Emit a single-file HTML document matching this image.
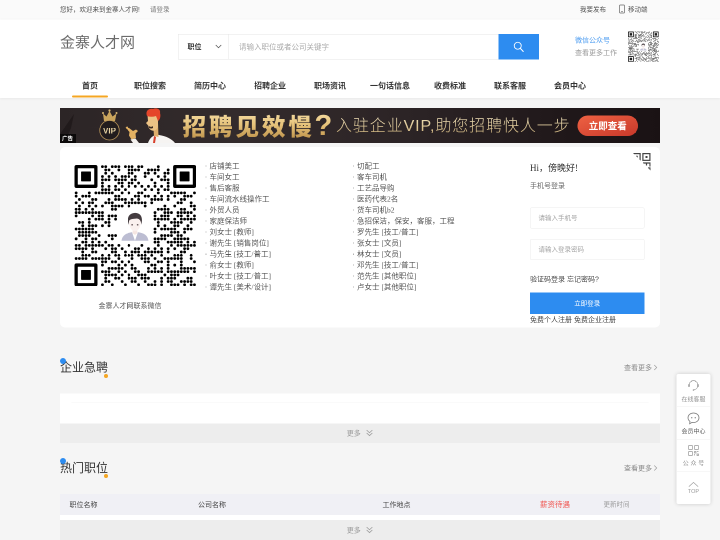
<!DOCTYPE html>
<html lang="zh-CN">
<head>
<meta charset="utf-8">
<title>金寨人才网</title>
<style>
*{box-sizing:border-box;margin:0;padding:0}
html,body{width:720px;height:540px;overflow:hidden;background:#f5f5f5}
body{font-family:"Liberation Sans","Noto Sans CJK SC",sans-serif;color:#333}
#stage{will-change:transform;position:absolute;left:0;top:0;width:1440px;height:1080px;transform:scale(.5);transform-origin:0 0;background:#f5f5f5;overflow:hidden}
.abs{position:absolute;white-space:nowrap}
#topbar{left:0;top:0;width:1440px;height:39px;background:#fafafa}
#topbar span{position:absolute;top:0;line-height:37px;font-size:13px;color:#505050;white-space:nowrap}
#header{left:0;top:39px;width:1440px;height:157px;background:#fff;box-shadow:0 1px 6px rgba(0,0,0,.07)}
#logo{left:120px;top:61px;font-size:30px;line-height:48px;color:#6c6c6c;font-weight:400;letter-spacing:0}
#search{left:356px;top:68px;width:722px;height:51px;border:1px solid #e4e4e4;background:#fff}
#search .sel{position:absolute;left:0;top:0;width:100px;height:49px;border-right:1px solid #e4e4e4}
#search .sel b{position:absolute;left:18px;top:0;line-height:49px;font-size:14px;color:#333}
#search .ph{position:absolute;left:121px;top:0;line-height:49px;font-size:15px;color:#aaa}
#sbtn{left:997px;top:68px;width:81px;height:51px;background:#2d8cf0}
.nav{top:152px;width:120px;text-align:center;font-size:16px;font-weight:bold;color:#333;line-height:40px}
#navline{left:144px;top:191px;width:72px;height:4px;background:#f5a623;border-radius:2px}
#banner{left:120px;top:216px;width:1200px;height:70px;background:#2c2526;overflow:hidden}
#card{left:120px;top:294px;width:1200px;height:361px;background:#fff;border-radius:10px}
.li{font-family:"Liberation Serif","Noto Sans CJK SC",serif;font-size:15px;color:#555;line-height:22px}
.sec{font-size:24px;color:#333;line-height:36px}
.more{font-size:14px;color:#888;line-height:20px}
.dotb{width:12px;height:12px;border-radius:50%;background:#2d8cf0}
.doto{width:8px;height:8px;border-radius:50%;background:#f5a623}
.bar{left:120px;width:1200px;background:#ededed;text-align:center;font-size:14px;color:#999}
.jl{list-style:none;line-height:22.08px}
.jl li{height:22.08px;padding-left:9px;position:relative}
.jl li i{position:absolute;left:1px;top:10px;width:2px;height:2px;background:#999;border-radius:1px}
.inp{left:1060px;width:229px;height:42px;border:1px solid #ebebeb;border-radius:3px;background:#fff}
.inp span{position:absolute;left:16px;top:0;line-height:40px;font-size:13px;color:#a2a2a2}
.th{top:988px;line-height:42px;font-size:14px;color:#444}
.sw{left:1353px;width:68px;text-align:center;font-size:12px;line-height:18px}
</style>
</head>
<body>
<div id="stage">
<!--QRSYM-->
<svg width="0" height="0" style="position:absolute"><defs><symbol id="qr" viewBox="0 0 370 370" preserveAspectRatio="none">
<path d="M85 5h0M95 5h0M115 5h0M125 5h0M135 5h0M155 5h0M165 5h0M175 5h0M195 5h0M205 5h0M255 5h0M95 15h0M105 15h0M135 15h0M165 15h0M175 15h0M185 15h0M195 15h0M225 15h0M235 15h0M245 15h0M255 15h0M285 15h0M95 25h0M115 25h0M165 25h0M175 25h0M215 25h0M225 25h0M245 25h0M275 25h0M285 25h0M85 35h0M105 35h0M125 35h0M145 35h0M155 35h0M165 35h0M185 35h0M215 35h0M255 35h0M275 35h0M85 45h0M95 45h0M105 45h0M125 45h0M135 45h0M145 45h0M155 45h0M175 45h0M185 45h0M235 45h0M265 45h0M275 45h0M285 45h0M85 55h0M135 55h0M145 55h0M165 55h0M175 55h0M195 55h0M245 55h0M285 55h0M85 65h0M105 65h0M125 65h0M145 65h0M165 65h0M185 65h0M205 65h0M225 65h0M245 65h0M265 65h0M285 65h0M85 75h0M95 75h0M105 75h0M125 75h0M135 75h0M155 75h0M215 75h0M235 75h0M255 75h0M275 75h0M285 75h0M5 85h0M45 85h0M65 85h0M75 85h0M85 85h0M95 85h0M105 85h0M115 85h0M145 85h0M165 85h0M195 85h0M205 85h0M255 85h0M295 85h0M305 85h0M315 85h0M325 85h0M335 85h0M365 85h0M5 95h0M25 95h0M35 95h0M45 95h0M125 95h0M135 95h0M185 95h0M195 95h0M215 95h0M225 95h0M245 95h0M265 95h0M285 95h0M305 95h0M335 95h0M345 95h0M355 95h0M15 105h0M55 105h0M65 105h0M105 105h0M125 105h0M135 105h0M145 105h0M155 105h0M175 105h0M195 105h0M235 105h0M245 105h0M255 105h0M265 105h0M285 105h0M325 105h0M335 105h0M5 115h0M25 115h0M45 115h0M55 115h0M95 115h0M105 115h0M115 115h0M155 115h0M165 115h0M175 115h0M185 115h0M195 115h0M205 115h0M215 115h0M235 115h0M315 115h0M325 115h0M355 115h0M15 125h0M45 125h0M65 125h0M85 125h0M115 125h0M125 125h0M135 125h0M145 125h0M165 125h0M215 125h0M275 125h0M305 125h0M355 125h0M365 125h0M5 135h0M15 135h0M35 135h0M55 135h0M115 135h0M125 135h0M255 135h0M265 135h0M275 135h0M285 135h0M325 135h0M335 135h0M365 135h0M5 145h0M15 145h0M25 145h0M35 145h0M45 145h0M55 145h0M65 145h0M75 145h0M85 145h0M245 145h0M275 145h0M285 145h0M295 145h0M315 145h0M325 145h0M335 145h0M345 145h0M355 145h0M5 155h0M55 155h0M75 155h0M85 155h0M105 155h0M115 155h0M125 155h0M245 155h0M265 155h0M275 155h0M285 155h0M315 155h0M325 155h0M345 155h0M365 155h0M45 165h0M65 165h0M75 165h0M85 165h0M105 165h0M125 165h0M245 165h0M255 165h0M265 165h0M275 165h0M285 165h0M305 165h0M325 165h0M335 165h0M345 165h0M355 165h0M365 165h0M15 175h0M25 175h0M45 175h0M95 175h0M105 175h0M255 175h0M295 175h0M305 175h0M315 175h0M325 175h0M355 175h0M25 185h0M45 185h0M55 185h0M65 185h0M85 185h0M105 185h0M255 185h0M275 185h0M305 185h0M315 185h0M345 185h0M5 195h0M15 195h0M25 195h0M35 195h0M45 195h0M55 195h0M245 195h0M265 195h0M275 195h0M285 195h0M295 195h0M305 195h0M335 195h0M345 195h0M355 195h0M15 205h0M25 205h0M35 205h0M45 205h0M55 205h0M65 205h0M245 205h0M295 205h0M305 205h0M315 205h0M335 205h0M15 215h0M25 215h0M35 215h0M45 215h0M75 215h0M105 215h0M115 215h0M125 215h0M265 215h0M275 215h0M285 215h0M295 215h0M315 215h0M325 215h0M5 225h0M35 225h0M55 225h0M65 225h0M115 225h0M245 225h0M255 225h0M265 225h0M275 225h0M305 225h0M315 225h0M325 225h0M335 225h0M345 225h0M25 235h0M35 235h0M55 235h0M75 235h0M95 235h0M245 235h0M255 235h0M285 235h0M295 235h0M305 235h0M315 235h0M325 235h0M345 235h0M365 235h0M5 245h0M15 245h0M35 245h0M45 245h0M55 245h0M65 245h0M75 245h0M85 245h0M105 245h0M115 245h0M135 245h0M165 245h0M205 245h0M255 245h0M295 245h0M315 245h0M325 245h0M335 245h0M345 245h0M355 245h0M365 245h0M5 255h0M15 255h0M25 255h0M35 255h0M55 255h0M95 255h0M115 255h0M125 255h0M145 255h0M185 255h0M195 255h0M225 255h0M245 255h0M265 255h0M285 255h0M305 255h0M335 255h0M345 255h0M25 265h0M55 265h0M65 265h0M115 265h0M125 265h0M155 265h0M175 265h0M185 265h0M195 265h0M215 265h0M225 265h0M235 265h0M245 265h0M255 265h0M265 265h0M285 265h0M325 265h0M335 265h0M25 275h0M35 275h0M45 275h0M85 275h0M105 275h0M125 275h0M135 275h0M155 275h0M165 275h0M175 275h0M195 275h0M205 275h0M215 275h0M235 275h0M265 275h0M305 275h0M315 275h0M325 275h0M355 275h0M5 285h0M15 285h0M25 285h0M35 285h0M55 285h0M65 285h0M75 285h0M85 285h0M95 285h0M105 285h0M135 285h0M175 285h0M205 285h0M215 285h0M225 285h0M245 285h0M275 285h0M285 285h0M295 285h0M305 285h0M315 285h0M325 285h0M355 285h0M85 295h0M95 295h0M115 295h0M125 295h0M145 295h0M165 295h0M215 295h0M225 295h0M255 295h0M265 295h0M285 295h0M325 295h0M365 295h0M85 305h0M135 305h0M155 305h0M175 305h0M235 305h0M245 305h0M285 305h0M305 305h0M325 305h0M105 315h0M115 315h0M125 315h0M135 315h0M145 315h0M175 315h0M185 315h0M225 315h0M245 315h0M265 315h0M285 315h0M325 315h0M335 315h0M345 315h0M355 315h0M365 315h0M85 325h0M95 325h0M105 325h0M135 325h0M155 325h0M185 325h0M195 325h0M225 325h0M235 325h0M245 325h0M255 325h0M265 325h0M285 325h0M295 325h0M305 325h0M315 325h0M325 325h0M335 325h0M345 325h0M365 325h0M95 335h0M105 335h0M115 335h0M125 335h0M145 335h0M165 335h0M195 335h0M205 335h0M215 335h0M275 335h0M295 335h0M305 335h0M315 335h0M95 345h0M125 345h0M135 345h0M165 345h0M175 345h0M185 345h0M205 345h0M215 345h0M225 345h0M265 345h0M285 345h0M295 345h0M305 345h0M345 345h0M355 345h0M95 355h0M105 355h0M145 355h0M175 355h0M185 355h0M215 355h0M245 355h0M265 355h0M285 355h0M295 355h0M325 355h0M335 355h0M345 355h0M355 355h0M85 365h0M115 365h0M155 365h0M195 365h0M225 365h0M235 365h0M245 365h0M265 365h0M295 365h0M305 365h0M315 365h0M335 365h0M355 365h0M365 365h0" stroke="#000" stroke-width="8.600" stroke-linecap="round" fill="none"/>
<path fill-rule="evenodd" d="M6 0h58a6 6 0 0 1 6 6v58a6 6 0 0 1 -6 6h-58a6 6 0 0 1 -6 -6v-58a6 6 0 0 1 6 -6zM11 10a1 1 0 0 0 -1 1v48a1 1 0 0 0 1 1h48a1 1 0 0 0 1 -1v-48a1 1 0 0 0 -1 -1z" fill="#000"/><rect x="20" y="20" width="30" height="30" rx="2" fill="#000"/><path fill-rule="evenodd" d="M306 0h58a6 6 0 0 1 6 6v58a6 6 0 0 1 -6 6h-58a6 6 0 0 1 -6 -6v-58a6 6 0 0 1 6 -6zM311 10a1 1 0 0 0 -1 1v48a1 1 0 0 0 1 1h48a1 1 0 0 0 1 -1v-48a1 1 0 0 0 -1 -1z" fill="#000"/><rect x="320" y="20" width="30" height="30" rx="2" fill="#000"/><path fill-rule="evenodd" d="M6 300h58a6 6 0 0 1 6 6v58a6 6 0 0 1 -6 6h-58a6 6 0 0 1 -6 -6v-58a6 6 0 0 1 6 -6zM11 310a1 1 0 0 0 -1 1v48a1 1 0 0 0 1 1h48a1 1 0 0 0 1 -1v-48a1 1 0 0 0 -1 -1z" fill="#000"/><rect x="20" y="320" width="30" height="30" rx="2" fill="#000"/>
<g>
<path d="M143 231 C145 214 158 207 174 205 L194 205 C210 207 223 214 225 231 Z" fill="#bcbdd2"/>
<path d="M175 205 L184 231 L193 205 Z" fill="#fff"/>
<path d="M177 196 h14 v12 l-7 5 l-7 -5 z" fill="#f6e6e2"/>
<path d="M166 170 C166 158 174 154 184 154 C194 154 202 158 202 170 C202 190 194 202 184 202 C174 202 166 190 166 170 Z" fill="#faf0ee"/>
<path d="M165 182 C158 160 166 147 184 146 C200 146 210 158 203 182 C203 170 198 164 190 163 C180 164 170 164 166 170 Z" fill="#443c40"/>
<ellipse cx="175.400" cy="182.300" rx="2.600" ry="1.800" fill="#3a2a2e"/><ellipse cx="192.100" cy="182.300" rx="2.600" ry="1.800" fill="#3a2a2e"/>
</g>
</symbol></defs></svg>
<!--/QRSYM-->
<div id="topbar" class="abs">
<span style="left:120px">您好，欢迎来到金寨人才网!</span>
<span style="left:300px;color:#777">请登录</span>
<span style="left:1160px">我要发布</span>
<span style="left:1256px">移动端</span>
</div>
<div id="header" class="abs"></div>
<div id="logo" class="abs">金寨人才网</div>
<div id="search" class="abs"><div class="sel"><b>职位</b></div><span class="ph">请输入职位或者公司关键字</span></div>
<div id="sbtn" class="abs"></div>
<div class="abs nav" style="left:120px">首页</div>
<div class="abs nav" style="left:240px">职位搜索</div>
<div class="abs nav" style="left:360px">简历中心</div>
<div class="abs nav" style="left:480px">招聘企业</div>
<div class="abs nav" style="left:600px">职场资讯</div>
<div class="abs nav" style="left:720px">一句话信息</div>
<div class="abs nav" style="left:840px">收费标准</div>
<div class="abs nav" style="left:960px">联系客服</div>
<div class="abs nav" style="left:1080px">会员中心</div>
<div id="navline" class="abs"></div>
<svg class="abs" style="left:430px;top:87px" width="14" height="12" viewBox="0 0 14 12"><path d="M1.500 3 L7 8.500 L12.500 3" fill="none" stroke="#555" stroke-width="1.500"/></svg>
<svg class="abs" style="left:1020px;top:76px" width="36" height="36" viewBox="0 0 36 36"><circle cx="15.5" cy="15.5" r="7" fill="none" stroke="#fff" stroke-width="1.700"/><path d="M20.500 20.500 L26.500 27" stroke="#fff" stroke-width="1.900" stroke-linecap="round"/></svg>
<div class="abs" style="left:1150px;top:70px;font-size:14px;line-height:20px;color:#4a9bf0">微信公众号</div>
<div class="abs" style="left:1150px;top:95px;font-size:14px;line-height:20px;color:#999">查看更多工作</div>
<svg class="abs" style="left:1238px;top:9px" width="12" height="18" viewBox="0 0 12 18"><rect x="1" y="1" width="10" height="16" rx="1.5" fill="none" stroke="#666" stroke-width="1.400"/><path d="M4 14 H8" stroke="#666" stroke-width="1.200"/></svg>
<svg class="abs" style="left:1256px;top:63.4px;opacity:.88" width="61.5" height="60.8"><use href="#qr" width="61.5" height="60.8"/></svg>
<div id="banner" class="abs"><svg width="1200" height="70" viewBox="0 0 1200 70" style="position:absolute;left:0;top:0">
<defs>
<linearGradient id="bg" x1="0" x2="1" y1="0" y2="0"><stop offset="0" stop-color="#2c2526"/><stop offset=".3" stop-color="#332b2c"/><stop offset=".6" stop-color="#2b2325"/><stop offset=".85" stop-color="#1f1719"/><stop offset="1" stop-color="#1a1214"/></linearGradient>
<linearGradient id="gold" x1="0" x2="0" y1="0" y2="1"><stop offset="0" stop-color="#f7e2ae"/><stop offset=".5" stop-color="#e6c27a"/><stop offset="1" stop-color="#b98d45"/></linearGradient>
<linearGradient id="gold2" x1="0" x2="0" y1="0" y2="1"><stop offset="0" stop-color="#efe0b8"/><stop offset="1" stop-color="#cdb27c"/></linearGradient>
<linearGradient id="red" x1="0" x2="1" y1="0" y2="1"><stop offset="0" stop-color="#ee6243"/><stop offset="1" stop-color="#c8382a"/></linearGradient>
</defs>
<rect width="1200" height="70" fill="url(#bg)"/>
<path d="M0 52 L28 12 L22 40 L10 70 L0 70 Z" fill="#1e1819" opacity=".8"/>
<rect x="0" y="52" width="32" height="18" fill="#0c0a0a"/>
<text x="4" y="64.500" font-size="11" fill="#fff" font-family="'Liberation Sans','Noto Sans CJK SC',sans-serif" font-weight="bold">广告</text>
<!-- crown -->
<path d="M88 26 L86 11 L93 17 L99 6 L105 17 L113 11 L110 26 Z" fill="#c9a45c"/>
<circle cx="86" cy="10" r="2" fill="#d9b670"/><circle cx="99" cy="5" r="2.200" fill="#d9b670"/><circle cx="113" cy="10" r="2" fill="#d9b670"/>
<circle cx="99" cy="44.500" r="19.500" fill="#211c1d" stroke="#b9965a" stroke-width="1.600"/>
<text x="99" y="50.500" text-anchor="middle" font-size="16" font-weight="bold" fill="#e6d3a3" font-family="'Liberation Sans',sans-serif">VIP</text>
<!-- hand -->
<path d="M131 39 L134 37 L146 46 L152 43 L156 46 L151 51 L152 60 L143 63 L138 55 L139 48 Z" fill="#e3b162"/>
<path d="M141 63 L151 61 L158 70 L146 70 Z" fill="#f4f1ee"/>
<!-- man -->
<path d="M176 70 C180 58 190 52 198 54 C212 56 224 62 230 70 Z" fill="#f6f4f2"/>
<path d="M186 30 L196 30 L197 58 L188 56 Z" fill="#deae6c"/>
<path d="M175 14 C176 8 194 8 196 16 L196 34 C196 42 190 47 184 45 C180 44 177 40 177 36 L172 30 L176 26 Z" fill="#ecc285"/>
<path d="M174 16 C170 6 178 0 186 2 C192 -1 202 2 200 10 C202 16 200 24 196 26 L192 16 C186 18 180 18 174 16 Z" fill="#e5452a"/>
<path d="M178 36 C180 38 184 38 186 36 L186 40 C183 42 180 41 178 39 Z" fill="#3a2a22"/>
<path d="M188 56 L192 58 L190 70 L186 70 Z" fill="#d8402c"/>
<!-- headline -->
<text x="245" y="53.500" font-size="47" font-weight="900" fill="url(#gold)" font-family="'Liberation Sans','Noto Sans CJK SC',sans-serif" letter-spacing="6">招聘见效慢<tspan dx="-1" font-size="58">?</tspan></text>
<text x="552" y="46" font-size="32" font-weight="300" fill="url(#gold2)" font-family="'Liberation Sans','Noto Sans CJK SC',sans-serif" letter-spacing="1.800">入驻企业VIP,助您招聘快人一步</text>
<rect x="1035" y="15" width="121" height="41" rx="20.500" fill="url(#red)"/>
<text x="1095.500" y="42.500" text-anchor="middle" font-size="19" font-weight="bold" fill="#fff" font-family="'Liberation Sans','Noto Sans CJK SC',sans-serif">立即查看</text>
</svg></div>
<div id="card" class="abs"></div>
<ul class="abs li jl" style="left:410px;top:320.5px">
<li><i></i>店铺美工</li>
<li><i></i>车间女工</li>
<li><i></i>售后客服</li>
<li><i></i>车间流水线操作工</li>
<li><i></i>外贸人员</li>
<li><i></i>家庭保洁师</li>
<li><i></i>刘女士 [教师]</li>
<li><i></i>谢先生 [销售岗位]</li>
<li><i></i>马先生 [技工/普工]</li>
<li><i></i>俞女士 [教师]</li>
<li><i></i>叶女士 [技工/普工]</li>
<li><i></i>谭先生 [美术/设计]</li>
</ul>
<ul class="abs li jl" style="left:705px;top:320.5px">
<li><i></i>切配工</li>
<li><i></i>客车司机</li>
<li><i></i>工艺品导购</li>
<li><i></i>医药代表2名</li>
<li><i></i>货车司机b2</li>
<li><i></i>急招保洁，保安，客服，工程</li>
<li><i></i>罗先生 [技工/普工]</li>
<li><i></i>张女士 [文员]</li>
<li><i></i>林女士 [文员]</li>
<li><i></i>邓先生 [技工/普工]</li>
<li><i></i>范先生 [其他职位]</li>
<li><i></i>卢女士 [其他职位]</li>
</ul>
<div class="abs" style="left:197px;top:601px;font-size:14px;line-height:20px;color:#555">金寨人才网联系微信</div>
<div class="abs" style="left:1060px;top:324px;font-family:'Liberation Serif','Noto Sans CJK SC',serif;font-size:18px;line-height:24px;color:#333">Hi，傍晚好!</div>
<div class="abs" style="left:1060px;top:361px;font-size:14px;line-height:20px;color:#666">手机号登录</div>
<div class="abs inp" style="top:415px"><span>请输入手机号</span></div>
<div class="abs inp" style="top:478px"><span>请输入登录密码</span></div>
<div class="abs" style="left:1060px;top:548px;font-size:14px;line-height:20px;color:#484848">验证码登录 忘记密码?</div>
<div class="abs" style="left:1060px;top:585px;width:229px;height:43px;background:#2d8cf0;color:#fff;font-size:13px;line-height:43px;text-align:center">立即登录</div>
<div class="abs" style="left:1060px;top:629px;font-size:14px;line-height:20px;color:#444">免费个人注册 免费企业注册</div>
<svg class="abs" style="left:148.5px;top:329.5px" width="243.2" height="242.8"><use href="#qr" width="243.2" height="242.8"/></svg>
<svg class="abs" style="left:1265.5px;top:305.5px" width="35" height="35" viewBox="0 0 35 35"><defs><clipPath id="tri"><path d="M0 0 H35 V35 Z"/></clipPath></defs><g clip-path="url(#tri)" fill="none" stroke="#444" stroke-width="2.400"><rect x="1.200" y="1.200" width="13" height="13"/><rect x="19.800" y="1.200" width="14" height="13.500"/><rect x="25" y="6" width="4" height="4" fill="#444" stroke="none"/><rect x="5.500" y="5.500" width="4" height="4" fill="#444" stroke="none"/><path d="M20 20 H34 V27 M27 20 V25 M30 30 H34 V35"/></g></svg>

<div class="abs sec" style="left:120px;top:717px">企业急聘</div>
<div class="abs dotb" style="left:120px;top:715.5px"></div>
<div class="abs doto" style="left:208px;top:747.5px"></div>
<div class="abs more" style="right:125px;top:725px">查看更多<svg width="8" height="12" viewBox="0 0 8 12" style="vertical-align:-1px;margin-left:3px"><path d="M1.5 1 L6.5 6 L1.5 11" fill="none" stroke="#999" stroke-width="1.3"/></svg></div>
<div class="abs" style="left:120px;top:787px;width:1200px;height:60px;background:#fff"></div>
<div class="abs" style="left:143px;top:805px;width:1154px;height:1px;background:#f4f4f4"></div>
<div class="abs bar" style="top:847px;height:39px;line-height:39px">更多<svg width="16" height="16" viewBox="0 0 14 14" style="vertical-align:-3px;margin-left:9px"><path d="M2 2 L7 6.5 L12 2 M2 7 L7 11.5 L12 7" fill="none" stroke="#999" stroke-width="1.3"/></svg></div>
<div class="abs sec" style="left:120px;top:918px">热门职位</div>
<div class="abs dotb" style="left:120px;top:916px"></div>
<div class="abs doto" style="left:208px;top:948px"></div>
<div class="abs more" style="right:125px;top:926px">查看更多<svg width="8" height="12" viewBox="0 0 8 12" style="vertical-align:-1px;margin-left:3px"><path d="M1.5 1 L6.5 6 L1.5 11" fill="none" stroke="#999" stroke-width="1.3"/></svg></div>
<div class="abs" style="left:120px;top:988px;width:1200px;height:42px;background:#f0f0f5"></div>
<div class="abs th" style="left:139px">职位名称</div>
<div class="abs th" style="left:396px">公司名称</div>
<div class="abs th" style="left:765px">工作地点</div>
<div class="abs th" style="left:1080px;color:#f0544f;font-size:15px">薪资待遇</div>
<div class="abs th" style="left:1207px;color:#999;font-size:13px">更新时间</div>
<div class="abs" style="left:120px;top:1030px;width:1200px;height:10px;background:#fff"></div>
<div class="abs bar" style="top:1040px;height:40px;line-height:40px">更多<svg width="16" height="16" viewBox="0 0 14 14" style="vertical-align:-3px;margin-left:9px"><path d="M2 2 L7 6.5 L12 2 M2 7 L7 11.5 L12 7" fill="none" stroke="#999" stroke-width="1.3"/></svg></div>

<div class="abs" style="left:1353px;top:748px;width:68px;height:260px;background:#fff;border-radius:4px;box-shadow:0 0 8px rgba(0,0,0,.18)"></div>
<div class="abs" style="left:1354px;top:812px;width:66px;height:1px;background:#eee"></div>
<div class="abs" style="left:1354px;top:878px;width:66px;height:1px;background:#eee"></div>
<div class="abs" style="left:1354px;top:942px;width:66px;height:1px;background:#eee"></div>
<svg class="abs" style="left:1374px;top:757px" width="26" height="28" viewBox="0 0 26 28"><path d="M4.5 15 V12.5 A8.5 8.5 0 0 1 21.500 12.5 V15" fill="none" stroke="#999" stroke-width="1.4"/><path d="M21.5 15 A8.5 8.5 0 0 1 14 22.500" fill="none" stroke="#999" stroke-width="1.4"/><rect x="2.500" y="11" width="3" height="6" rx="1.5" fill="#999"/><rect x="20.500" y="11" width="3" height="6" rx="1.5" fill="#999"/><circle cx="13" cy="23" r="1.6" fill="#999"/></svg>
<div class="abs sw" style="top:789.5px;color:#909090">在线客服</div>
<svg class="abs" style="left:1373px;top:823px" width="28" height="28" viewBox="0 0 28 28"><path d="M14 3 C7.500 3 3 7.300 3 12.600 C3 15.600 4.500 18.200 7 19.900 L6.300 24.500 L11 21.800 C12 22 13 22.100 14 22.100 C20.500 22.100 25 17.800 25 12.600 C25 7.300 20.500 3 14 3 Z" fill="none" stroke="#777" stroke-width="1.5"/><circle cx="10.500" cy="12.500" r="1.300" fill="#777"/><circle cx="17.500" cy="12.500" r="1.300" fill="#777"/></svg>
<div class="abs sw" style="top:853.5px;color:#555">会员中心</div>
<svg class="abs" style="left:1376px;top:890px" width="22" height="22" viewBox="0 0 22 22" fill="none" stroke="#999" stroke-width="1.400"><rect x="1" y="1" width="8" height="8" rx="1"/><rect x="13" y="1" width="8" height="8" rx="1"/><rect x="1" y="13" width="8" height="8" rx="1"/><path d="M13 13 h3 v3 h-3 z M18 18 h3 v3 h-3z M18 13 h3 M13 18 v3" /></svg>
<div class="abs sw" style="top:918px;color:#909090;letter-spacing:3.5px;text-indent:3.5px">公众号</div>
<svg class="abs" style="left:1376px;top:963px" width="22" height="12" viewBox="0 0 26 14"><path d="M2 12 L13 2 L24 12" fill="none" stroke="#999" stroke-width="1.500"/></svg>
<div class="abs sw" style="top:973px;color:#999;font-size:11px">TOP</div>

</div>
</body>
</html>
